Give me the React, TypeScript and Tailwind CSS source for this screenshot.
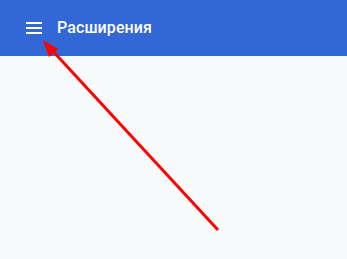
export default function App() {
  return (
    <div className="relative w-[347px] h-[259px] overflow-hidden bg-[#f8f9fb] font-['Roboto',sans-serif]">
      <header className="h-[56px] bg-[#3367d6] flex items-center pl-[26px] text-white">
        <div className="flex flex-col gap-[3px] w-[16px]">
          <span className="block h-[2px] bg-white" />
          <span className="block h-[2px] bg-white" />
          <span className="block h-[2px] bg-white" />
        </div>
        <h1 className="ml-[15px] text-[16px] font-medium tracking-[0.1px]">Расширения</h1>
      </header>

      <svg className="absolute inset-0 pointer-events-none" width="347" height="259" viewBox="0 0 347 259">
        <line x1="218" y1="230" x2="50" y2="48" stroke="#ff0000" strokeWidth="3" />
        <polygon points="43,40 58,49 49,57" fill="#ff0000" />
      </svg>
    </div>
  );
}
